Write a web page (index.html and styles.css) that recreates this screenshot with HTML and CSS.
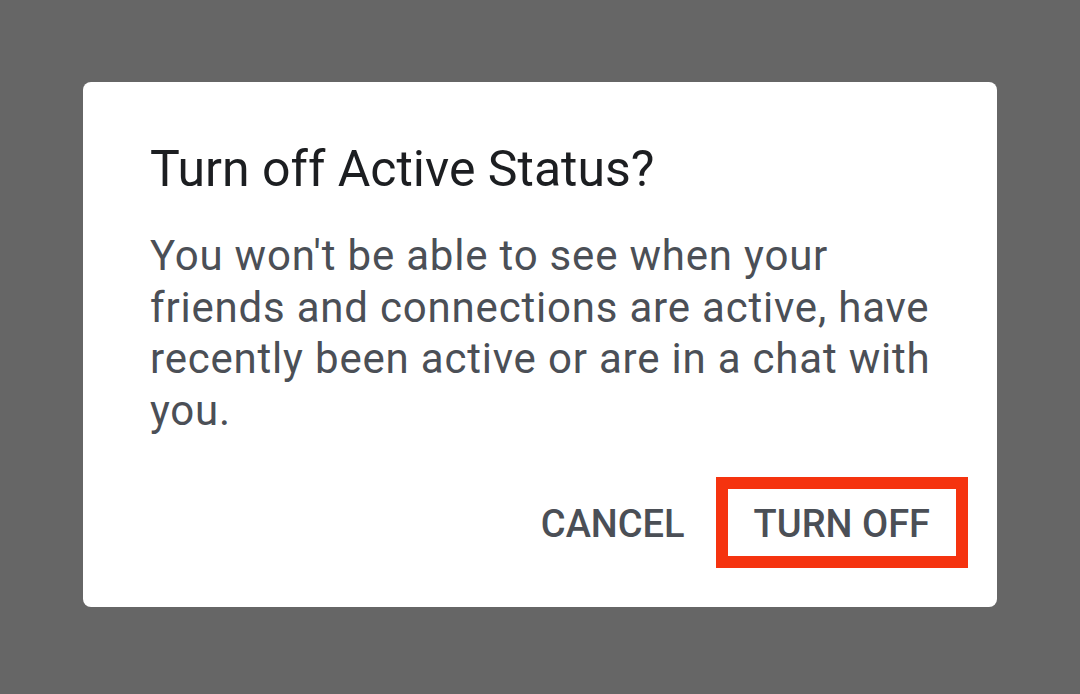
FILE: index.html
```html
<!DOCTYPE html>
<html lang="en">
<head>
  <meta charset="UTF-8" />
  <title>Turn off Active Status?</title>
  <link rel="stylesheet" href="styles.css">
</head>
<body>
  <div class="dialog">
    <h1 class="dialog-title">Turn off Active Status?</h1>
    <p class="dialog-text">You won't be able to see when your friends and connections are active, have recently been active or are in a chat with you.</p>
    <div class="dialog-actions">
      <button class="action cancel">CANCEL</button>
      <button class="action highlighted">TURN OFF</button>
    </div>
  </div>
</body>
</html>
```

FILE: styles.css
```css
body {
  margin: 0;
  height: 694px;
  background: #666666;
  font-family: Roboto, sans-serif;
  display: flex;
  align-items: flex-start;
}

.dialog {
  margin: 82px 0 0 83px;
  width: 914px;
  height: 525px;
  box-sizing: border-box;
  background: #ffffff;
  border-radius: 8px;
  padding: 57px 29px 0 67px;
  display: flex;
  flex-direction: column;
}

.dialog-title {
  margin: 0;
  font-size: 50px;
  font-weight: 400;
  line-height: 60px;
  color: #1c1e21;
}

.dialog-text {
  margin: 31px 0 0 0;
  max-width: 795px;
  font-size: 42px;
  letter-spacing: 0.8px;
  line-height: 51.7px;
  color: #4b4f56;
}

.dialog-actions {
  margin-top: 40px;
  display: flex;
  justify-content: flex-end;
  align-items: center;
  gap: 31px;
}

.action {
  font-family: Roboto, sans-serif;
  font-size: 38px;
  font-weight: 500;
  line-height: 43px;
  color: #4b4f56;
  background: none;
  border: 12px solid transparent;
  padding: 14px 26px 10px;
}

.cancel {
  border-width: 12px 0;
  padding: 14px 0 10px;
}

.highlighted {
  border-color: #f5330f;
}
```
